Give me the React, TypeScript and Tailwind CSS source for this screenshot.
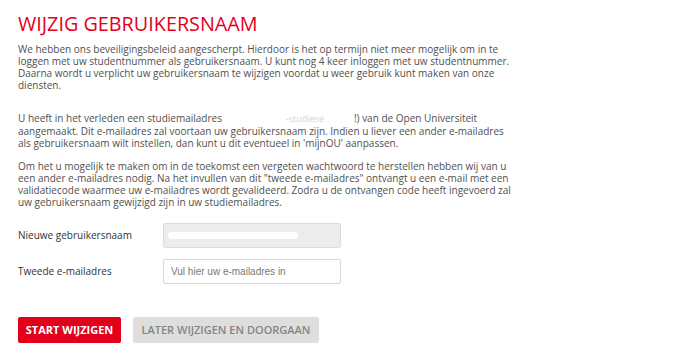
export default function App() {
  return (
    <div className="w-[700px] h-[350px] bg-white overflow-hidden font-['Open_Sans',sans-serif] text-[#505050]">
      <div className="pl-[18px] pt-[8px]">
        <h1 className="text-[19.8px] leading-[32px] text-[#e3001b] font-normal">
          WIJZIG GEBRUIKERSNAAM
        </h1>
        <div className="mt-[3px] text-[10px] leading-[12px] whitespace-nowrap">
          <p>
            We hebben ons beveiligingsbeleid aangescherpt. Hierdoor is het op termijn niet meer mogelijk om in te
            <br />
            loggen met uw studentnummer als gebruikersnaam. U kunt nog 4 keer inloggen met uw studentnummer.
            <br />
            Daarna wordt u verplicht uw gebruikersnaam te wijzigen voordat u weer gebruik kunt maken van onze
            <br />
            diensten.
          </p>
          <p className="mt-[21px]">
            U heeft in het verleden een studiemailadres
            <span className="inline-block w-[132px] pl-[64px] text-[#d4d4d4] text-[9px]">-studiese</span>
            !) van de Open Universiteit
            <br />
            aangemaakt. Dit e-mailadres zal voortaan uw gebruikersnaam zijn. Indien u liever een ander e-mailadres
            <br />
            als gebruikersnaam wilt instellen, dan kunt u dit eventueel in 'mijnOU' aanpassen.
          </p>
          <p className="mt-[11px]">
            Om het u mogelijk te maken om in de toekomst een vergeten wachtwoord te herstellen hebben wij van u
            <br />
            een ander e-mailadres nodig. Na het invullen van dit "tweede e-mailadres" ontvangt u een e-mail met een
            <br />
            validatiecode waarmee uw e-mailadres wordt gevalideerd. Zodra u de ontvangen code heeft ingevoerd zal
            <br />
            uw gebruikersnaam gewijzigd zijn in uw studiemailadres.
          </p>
        </div>
        <div className="mt-[15px] flex flex-col gap-[11px] text-[10px] text-[#333]">
          <div className="flex items-center">
            <label className="w-[145px]">Nieuwe gebruikersnaam</label>
            <div className="w-[178px] h-[25px] bg-[#ececec] border border-[#dcdcdc] rounded-[2px] flex items-center pl-[4px]">
              <span className="w-[130px] h-[7px] bg-white rounded-full" />
            </div>
          </div>
          <div className="flex items-center">
            <label className="w-[145px]">Tweede e-mailadres</label>
            <input
              placeholder="Vul hier uw e-mailadres in"
              className="w-[178px] h-[25px] bg-white border border-[#d6d6d6] rounded-[2px] px-[7px] text-[10px] font-['Liberation_Sans',sans-serif] placeholder:text-[#777] outline-none"
            />
          </div>
        </div>
        <div className="mt-[33px] flex gap-[12px]">
          <button className="h-[26px] w-[103px] bg-[#e3001b] text-white text-[11px] font-bold rounded-[2px]">
            START WIJZIGEN
          </button>
          <button className="h-[26px] w-[186px] bg-[#dedede] text-[#858585] text-[11px] font-semibold rounded-[2px]">
            LATER WIJZIGEN EN DOORGAAN
          </button>
        </div>
      </div>
    </div>
  );
}
